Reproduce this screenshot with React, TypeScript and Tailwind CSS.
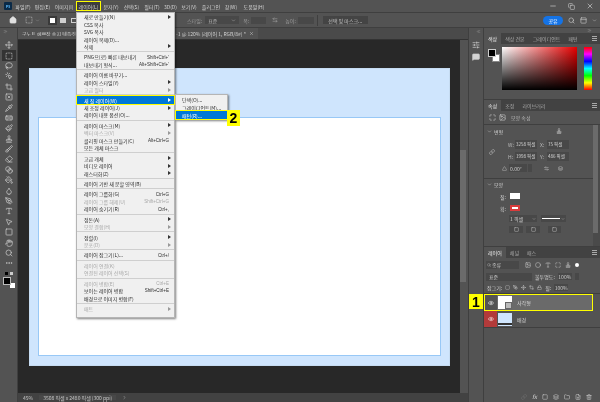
import {
  ArrowLeftRight, Bandage, Blend, Brush, ChevronDown, ChevronRight, ChevronsLeft, ChevronsRight, Circle, Copy, Crop, Droplet, Ellipsis, Eraser, Eye, FilePlus, Folder, Hand, Home,
  Image, Lasso, Layers, Link, Lock, Maximize, MessageSquare, Minus, MousePointer2, MousePointerClick, Move, Paintbrush, PaintBucket, PanelTop, PenTool, Pipette,
  Search, SlidersHorizontal, Square, SquareDashed, SquareX, Stamp, Trash2, Triangle, Type, X,
} from 'lucide-react';

const menuItems = [
  { label: '파일(F)', w: 'w-[20px]' },
  { label: '편집(E)', w: 'w-[19px]' },
  { label: '이미지(I)', w: 'w-[24px]' },
  { label: '레이어(L)', w: 'w-[25px]', boxed: true },
  { label: '문자(Y)', w: 'w-[20px]' },
  { label: '선택(S)', w: 'w-[21px]' },
  { label: '필터(T)', w: 'w-[20px]' },
  { label: '3D(D)', w: 'w-[17px]' },
  { label: '보기(V)', w: 'w-[20px]' },
  { label: '플러그인', w: 'w-[24px]' },
  { label: '창(W)', w: 'w-[16px]' },
  { label: '도움말(H)', w: 'w-[30px]' },
];

type Row = { t: string; key?: string; sub?: boolean; off?: boolean; hot?: boolean };

const layerMenu: Row[][] = [
  [{ t: '새로 만들기(N)', sub: true }, { t: 'CSS 복사' }, { t: 'SVG 복사' }, { t: '레이어 복제(D)...' }, { t: '삭제', sub: true }],
  [{ t: 'PNG으(로) 빠른 내보내기', key: 'Shift+Ctrl+\'' }, { t: '내보내기 형식...', key: 'Alt+Shift+Ctrl+\'' }],
  [{ t: '레이어 이름 바꾸기...' }, { t: '레이어 스타일(Y)', sub: true }, { t: '고급 필터', sub: true, off: true }],
  [{ t: '새 칠 레이어(W)', sub: true, hot: true }, { t: '새 조정 레이어(J)', sub: true }, { t: '레이어 내용 옵션(O)...' }],
  [{ t: '레이어 마스크(M)', sub: true }, { t: '벡터 마스크(V)', sub: true, off: true }, { t: '클리핑 마스크 만들기(C)', key: 'Alt+Ctrl+G' }, { t: '모든 개체 마스크' }],
  [{ t: '고급 개체', sub: true }, { t: '비디오 레이어', sub: true }, { t: '래스터화(Z)', sub: true }],
  [{ t: '레이어 기반 새 분할 영역(B)' }],
  [{ t: '레이어 그룹화(G)', key: 'Ctrl+G' }, { t: '레이어 그룹 해제(U)', key: 'Shift+Ctrl+G', off: true }, { t: '레이어 숨기기(R)', key: 'Ctrl+,' }],
  [{ t: '정돈(A)', sub: true }, { t: '모양 결합(H)', sub: true, off: true }],
  [{ t: '정렬(I)', sub: true }, { t: '분포(D)', sub: true, off: true }],
  [{ t: '레이어 잠그기(L)...', key: 'Ctrl+/' }],
  [{ t: '레이어 연결(K)', off: true }, { t: '연결된 레이어 선택(S)', off: true }],
  [{ t: '레이어 병합(E)', key: 'Ctrl+E', off: true }, { t: '보이는 레이어 병합', key: 'Shift+Ctrl+E' }, { t: '배경으로 이미지 병합(F)' }],
  [{ t: '매트', sub: true, off: true }],
];

const tools = [
  Move, SquareDashed, Lasso, MousePointerClick, Crop, SquareX, Pipette, Bandage, Paintbrush, Stamp, Brush, Eraser, Blend,
  PaintBucket, Droplet, PenTool, Type, MousePointer2, Square, Hand, Search, Ellipsis,
];

function MenuRow({ row }: { row: Row }) {
  return (
    <div
      className={`relative flex h-[7.45px] items-center justify-between pl-[7px] pr-[3px] text-[5px] leading-none ${
        row.hot ? 'bg-[#0078d7] text-white outline outline-1 outline-[#ffff00]' : row.off ? 'text-[#a8a8a8]' : 'text-[#2c2c2c]'
      }`}
    >
      <span className="whitespace-nowrap">{row.t}</span>
      {row.key && <span className="translate-y-[1px] whitespace-nowrap pr-[2px] font-['Liberation_Sans',sans-serif] text-[4.5px]">{row.key}</span>}
      {row.sub && <span className={`h-0 w-0 border-y-[2.5px] border-l-[3px] border-y-transparent ${row.hot ? 'border-l-white' : row.off ? 'border-l-[#999]' : 'border-l-[#333]'}`} />}
    </div>
  );
}

function LayerMenu() {
  return (
    <div className="absolute left-[76px] top-[12px] z-20 w-[99px] border border-[#b5b5b5] bg-[#f0f0f0] pb-[5px] shadow-[1px_1px_2px_rgba(0,0,0,0.5)]">
      {layerMenu.map((group, i) => (
        <div key={i}>
          {i > 0 && <div className="flex h-[3px] items-center"><div className="h-px w-full bg-[#cfcfcf]" /></div>}
          {group.map((row) => <MenuRow key={row.t} row={row} />)}
        </div>
      ))}
    </div>
  );
}

function FillSubmenu() {
  return (
    <div className="absolute left-[175px] top-[94px] z-20 w-[53px] border border-[#b5b5b5] bg-[#f0f0f0] text-[5px] leading-none text-[#2c2c2c] shadow-[1px_1px_2px_rgba(0,0,0,0.5)]">
      <div className="flex h-[8px] items-center pl-[6px]">단색(O)...</div>
      <div className="flex h-[8px] items-center whitespace-nowrap pl-[6px]">그레이디언트(M)...</div>
      <div className="flex h-[8px] items-center bg-[#0078d7] pl-[6px] text-white outline outline-1 outline-[#ffff00]">패턴(R)...</div>
    </div>
  );
}

function Callout({ n, className }: { n: string; className: string }) {
  return (
    <div className={`absolute z-30 flex items-center justify-center bg-[#ffff00] font-['Liberation_Sans',sans-serif] text-[14px] font-bold leading-none text-black ${className}`}>
      {n}
    </div>
  );
}

function TopBars() {
  return (
    <>
      <div className="flex h-[13px] items-center border-b border-[#3f3f3f] pl-[4px] text-[5px] leading-none text-[#d4d4d4]">
        <div className="mr-[1px] flex h-[8px] w-[8px] items-center justify-center rounded-[1px] bg-[#0b2a47] text-[4px] font-bold text-[#58b4f5]">Ps</div>
        <div className="flex items-center">
          {menuItems.map((m) => (
            <div key={m.label} className={`flex h-[10px] items-center justify-center whitespace-nowrap ${m.w} ${m.boxed ? 'border border-[#ffff00] bg-[#3d3d3d]' : ''}`}>
              {m.label}
            </div>
          ))}
        </div>
        <div className="ml-auto flex items-center gap-[11px] pr-[6px] text-[#cfcfcf]">
          <Minus size={8} />
          <Copy size={7} />
          <X size={8} />
        </div>
      </div>
      <div className="flex h-[15px] items-center border-b border-[#3f3f3f] pl-[9px] text-[5px] leading-none text-[#9a9a9a]">
        <Home size={8} className="text-[#e0e0e0]" fill="#e0e0e0" />
        <SquareDashed size={8} className="ml-[8px] text-[#bbb]" />
        <ChevronDown size={5} className="ml-[2px]" />
        <div className="ml-[8px] flex h-[9px] w-[9px] items-center justify-center bg-[#3a3a3a]"><div className="h-[5px] w-[5px] bg-white" /></div>
        <div className="ml-[3px] h-[5px] w-[6px] bg-[#d0d0d0]" />
        <div className="ml-[5px] h-[5px] w-[6px] border border-[#d0d0d0]" />
        <span className="ml-[110px]">스타일:</span>
        <div className="ml-[3px] flex h-[8px] w-[34px] items-center justify-between bg-[#484848] px-[3px] text-[#bbb]">표준<ChevronDown size={5} /></div>
        <span className="ml-[4px]">폭:</span>
        <div className="ml-[2px] h-[7px] w-[15px] bg-[#484848]" />
        <ArrowLeftRight size={6} className="ml-[6px] text-[#aaa]" />
        <span className="ml-[7px]">높이:</span>
        <div className="ml-[2px] h-[7px] w-[16px] bg-[#484848]" />
        <div className="ml-[3px] h-[11px] w-px bg-[#3f3f3f]" />
        <div className="ml-[5px] flex h-[8px] w-[45px] items-center justify-center bg-[#444] text-[#c4c4c4]">선택 및 마스크...</div>
        <div className="ml-auto flex items-center gap-[5px] pr-[3px] text-[#d0d0d0]">
          <div className="flex h-[9px] w-[20px] items-center justify-center rounded-full bg-[#1473e6] text-white">공유</div>
          <Search size={7} />
          <PanelTop size={7} />
          <ChevronDown size={5} />
        </div>
      </div>
    </>
  );
}

function Toolbar() {
  return (
    <div className="flex w-[18px] shrink-0 flex-col items-center border-r border-[#3f3f3f] text-[#d2d2d2]">
      <div className="flex h-[12px] w-full shrink-0 items-start pl-[3px] pt-[1px] text-[#aaa]"><ChevronsRight size={5} /></div>
      {tools.map((Icon, i) => (
        <div key={i} className={`flex h-[10.4px] w-[14px] shrink-0 items-center justify-center ${i === 1 ? 'bg-[#333]' : ''}`}>
          <Icon size={8} strokeWidth={2} />
        </div>
      ))}
      <div className="mt-[1px] flex h-[7px] w-full items-center justify-center gap-[2px]">
        <div className="h-[3px] w-[3px] bg-black" />
        <div className="h-[3px] w-[3px] bg-[#ccc]" />
      </div>
      <div className="relative h-[11px] w-[12px]">
        <div className="absolute bottom-0 right-0 h-[5px] w-[5px] bg-white" />
        <div className="absolute left-0 top-0 h-[8px] w-[8px] border border-[#bbb] bg-black" />
      </div>
    </div>
  );
}

function Canvas() {
  return (
    <div className="flex min-w-0 flex-1 flex-col">
      <div className="flex h-[12px] shrink-0 items-center border-b border-[#333] bg-[#4a4a4a]">
        <div className="flex h-full items-center whitespace-nowrap bg-[#535353] pl-[4px] pr-[4px] text-[5px] leading-none text-[#cfcfcf]">
          <span className="w-[154px] overflow-hidden">굿노트 예쁘장 속지 템플릿 제작 가이드.psd</span>
          <span className="mr-[3px]">-1 @ 120% (레이어 1, RGB/8#) *</span>
          <X size={5} />
        </div>
      </div>
      <div className="flex min-h-0 flex-1">
        <div className="flex-1 bg-[#282828] pl-[11px] pt-[28px]">
          <div className="h-[298px] w-[421px] border border-[#c6dcf2] bg-[#cfe5fd] pl-[8px] pt-[48px]">
            <div className="h-[239px] w-[403px] border border-[#98c8f6] bg-white" />
          </div>
        </div>
        <div className="flex w-[8px] shrink-0 flex-col bg-[#535353] pt-[110px]">
          <div className="h-[132px] w-[6px] bg-[#6b6b6b]" />
        </div>
      </div>
      <div className="flex h-[9px] shrink-0 items-center gap-[6px] bg-[#424242] pl-[5px] text-[5px] leading-none text-[#c4c4c4]">
        <span>45%</span>
        <span className="bg-[#484848] px-[4px]">3508 픽셀 x 2480 픽셀 (300 ppi)</span>
        <ChevronRight size={5} />
      </div>
    </div>
  );
}

function Dock() {
  return (
    <div className="flex w-[16px] shrink-0 flex-col items-center gap-[4px] border-x border-[#3f3f3f] text-[#d4d4d4]">
      <div className="flex h-[9px] w-full shrink-0 items-start justify-end pr-[2px] pt-[1px] text-[#aaa]"><ChevronsLeft size={5} /></div>
      <SlidersHorizontal size={8} />
      <MessageSquare size={8} fill="#d4d4d4" />
    </div>
  );
}

function PanelTabs({ tabs }: { tabs: string[] }) {
  return (
    <div className="flex h-[11px] shrink-0 items-stretch bg-[#424242] text-[5px] leading-none text-[#a8a8a8]">
      {tabs.map((t, i) => (
        <div key={t} className={`flex items-center px-[4px] ${i === 0 ? 'bg-[#535353] text-[#e8e8e8]' : ''}`}>{t}</div>
      ))}
      <div className="ml-auto flex w-[8px] flex-col justify-center gap-px">
        <div className="h-px w-[5px] bg-[#aaa]" />
        <div className="h-px w-[5px] bg-[#aaa]" />
        <div className="h-px w-[5px] bg-[#aaa]" />
      </div>
    </div>
  );
}

function Field({ label, value }: { label: string; value: string }) {
  return (
    <div className="flex items-center gap-[3px]">
      <span className="w-[4px] text-[#bbb]">{label}</span>
      <div className="flex h-[9px] w-[22px] items-center whitespace-nowrap bg-[#484848] pl-[1px] text-[4.5px] text-[#d4d4d4]">{value}</div>
    </div>
  );
}

function ColorPanel() {
  return (
    <div className="flex h-[56px] shrink-0 border-b border-[#3f3f3f] pl-[4px] pt-[3px]">
      <div className="relative mt-[2px] h-[13px] w-[14px]">
        <div className="absolute bottom-0 right-[2px] h-[8px] w-[8px] border border-[#888] bg-white" />
        <div className="absolute left-0 top-0 h-[8px] w-[8px] border border-[#ccc] bg-black" />
      </div>
      <div className="h-[43px] w-[75px] bg-[linear-gradient(to_top,#000,transparent),linear-gradient(to_right,#fff,#e60000)]" />
      <div className="ml-[7px] h-[43px] w-[8px] bg-[linear-gradient(to_bottom,#f00,#f0f,#00f,#0ff,#0f0,#ff0,#f00)]" />
    </div>
  );
}

function PropertiesPanel() {
  return (
    <div className="flex h-[146px] shrink-0 flex-col text-[5px] leading-none text-[#d0d0d0]">
      <PanelTabs tabs={['속성', '조정', '라이브러리']} />
      <div className="flex h-[14px] shrink-0 items-center gap-[3px] border-b border-[#3f3f3f] pl-[5px]">
        <Maximize size={7} />
        <Image size={7} />
        <span className="ml-[2px] text-[#b8b8b8]">모양 속성</span>
      </div>
      <div className="flex min-h-0 flex-1">
        <div className="min-w-0 flex-1">
          <div className="flex items-center gap-[2px] pl-[3px] pr-[31px] pt-[3px]">
            <ChevronDown size={5} />
            <span>변형</span>
            <Stamp size={6} className="ml-auto" />
          </div>
          <div className="mt-[5.5px] flex items-start pl-[5px]">
            <Link size={6} className="mr-[13px] mt-[9px]" />
            <div className="flex flex-col gap-[3px]">
              <div className="flex gap-[3px]"><Field label="W:" value="3258 픽셀" /><Field label="X:" value="75 픽셀" /></div>
              <div className="flex gap-[3px]"><Field label="H:" value="1998 픽셀" /><Field label="Y:" value="486 픽셀" /></div>
            </div>
          </div>
          <div className="mt-[3.5px] flex items-center gap-[1px] border-b border-[#3f3f3f] pb-[5.5px] pl-[18px]">
            <Triangle size={5} className="mr-[1px]" />
            <div className="flex h-[8px] w-[18px] items-center bg-[#484848] pl-[1px]">0.00°</div>
            <div className="h-[8px] w-[4px] bg-[#484848]" />
            <ArrowLeftRight size={5} className="ml-[11px]" />
            <Layers size={5} className="ml-[8px]" />
          </div>
          <div className="flex items-center gap-[2px] pl-[3px] pt-[3px]">
            <ChevronDown size={5} />
            <span>모양</span>
          </div>
          <div className="mt-[6.5px] flex items-center gap-[4px] pl-[16px]">
            <span>칠:</span>
            <div className="h-[6px] w-[10px] bg-white" />
          </div>
          <div className="mt-[6px] flex items-center gap-[4px] pl-[16px]">
            <span>획:</span>
            <div className="h-[6px] w-[10px] border-2 border-[#d93b3b] bg-white" />
          </div>
          <div className="mt-[4px] flex items-center gap-[4px] pl-[25px]">
            <div className="flex h-[7px] w-[28px] items-center justify-between bg-[#484848] px-[1px]">1 픽셀<ChevronDown size={4} /></div>
            <div className="flex h-[7px] w-[25px] items-center gap-[1px] bg-[#484848] px-[1px]"><div className="h-px w-full bg-white" /><ChevronDown size={4} className="shrink-0" /></div>
          </div>
          <div className="mt-[4px] flex items-center gap-[3px] pl-[25px]">
            <div className="flex h-[7px] w-[14px] items-center justify-center bg-[#484848]"><Square size={5} /></div>
            <div className="flex h-[7px] w-[14px] items-center justify-center bg-[#484848]"><Square size={5} /></div>
            <div className="ml-[5px] flex h-[7px] w-[13px] items-center justify-center bg-[#484848]"><Square size={5} /></div>
          </div>
        </div>
        <div className="w-[7px] shrink-0 bg-[#4a4a4a]"><div className="h-[108px] w-[5px] bg-[#6b6b6b]" /></div>
      </div>
    </div>
  );
}

function LayersPanel() {
  return (
    <div className="flex min-h-0 flex-1 flex-col border-t border-[#3f3f3f] text-[5px] leading-none text-[#cfcfcf]">
      <PanelTabs tabs={['레이어', '채널', '패스']} />
      <div className="flex h-[13px] shrink-0 items-center gap-[4px] pl-[2px] text-[#c8c8c8]">
        <div className="mr-[2px] flex h-[8px] w-[33px] items-center gap-[1px] bg-[#484848] px-[1px]"><Search size={4} />종류</div>
        <Image size={6} />
        <Circle size={6} />
        <Type size={6} />
        <Maximize size={6} />
        <Stamp size={6} />
        <div className="h-[4px] w-[4px] rounded-full bg-white" />
      </div>
      <div className="flex h-[11px] shrink-0 items-center gap-[3px] pl-[2px]">
        <div className="flex h-[8px] w-[46px] items-center bg-[#484848] px-[3px]">표준</div>
        <span>불투명도:</span>
        <div className="flex h-[7px] w-[14px] items-center justify-center bg-[#484848]">100%</div>
        <div className="h-[7px] w-[4px] bg-[#484848]" />
      </div>
      <div className="flex h-[12px] shrink-0 items-center gap-[3px] border-b border-[#3f3f3f] pl-[3px]">
        <span>잠그기:</span>
        <SquareDashed size={5} />
        <PenTool size={5} />
        <Move size={5} />
        <Crop size={5} />
        <Lock size={5} />
        <span>칠:</span>
        <div className="flex h-[7px] w-[14px] items-center justify-center bg-[#484848]">100%</div>
      </div>
      <div className="flex h-[17px] w-[109px] shrink-0 items-center bg-[#6a6a6a] outline outline-1 -outline-offset-1 outline-[#ffff00]">
        <div className="flex h-full w-[13px] items-center justify-center bg-[#535353]"><Eye size={6} className="text-white" /></div>
        <div className="ml-px flex h-[13px] w-[14px] items-end justify-end bg-white"><div className="h-[7px] w-[7px] border border-[#666] bg-[#bbb]" /></div>
        <span className="ml-[5px] text-[#dcdcdc]">사각형</span>
      </div>
      <div className="flex h-[17px] shrink-0 items-center border-b border-[#3f3f3f]">
        <div className="flex h-full w-[13px] items-center justify-center bg-[#b23a3a]"><Eye size={6} className="text-white" /></div>
        <div className="ml-px flex h-[13px] w-[14px] flex-col items-center justify-end bg-[#cfe5fd]"><div className="mb-[1px] h-[2px] w-full bg-[#333]" /></div>
        <span className="ml-[5px]">배경</span>
      </div>
      <div className="flex flex-1 items-end justify-end gap-[5px] pb-[2px] pr-[8px] text-[#d0d0d0]">
        <Link size={6} className="text-[#777]" />
        <span className="text-[6px] italic">fx</span>
        <Square size={6} />
        <Layers size={6} />
        <Folder size={6} />
        <FilePlus size={6} />
        <Trash2 size={6} />
      </div>
    </div>
  );
}

function RightPanel() {
  return (
    <div className="flex w-[116px] shrink-0 flex-col">
      <div className="flex h-[5px] shrink-0 items-center justify-end pr-[8px] text-[#aaa]"><ChevronsRight size={5} /></div>
      <PanelTabs tabs={['색상', '색상 견본', '그레이디언트', '패턴']} />
      <ColorPanel />
      <PropertiesPanel />
      <LayersPanel />
    </div>
  );
}

export default function App() {
  return (
    <div className="relative flex h-[402px] w-[600px] flex-col overflow-hidden bg-[#535353] font-['Noto_Sans_CJK_KR','Noto_Sans',sans-serif] blur-[0.25px]">
      <TopBars />
      <div className="flex min-h-0 flex-1">
        <Toolbar />
        <Canvas />
        <Dock />
        <RightPanel />
      </div>
      <LayerMenu />
      <FillSubmenu />
      <Callout n="2" className="left-[227px] top-[110px] h-[16px] w-[13px]" />
      <Callout n="1" className="left-[469px] top-[294px] h-[15px] w-[14px]" />
    </div>
  );
}
